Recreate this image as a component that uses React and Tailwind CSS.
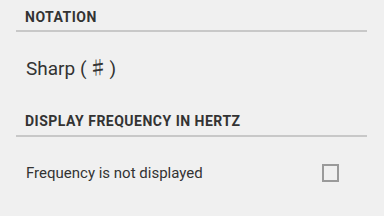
export default function App() {
  return (
    <div className="w-[384px] h-[216px] bg-[#f0f0f0] overflow-hidden text-[#333333]" style={{ fontFamily: 'Roboto, "Liberation Sans", sans-serif' }}>
      <div className="pt-[9px] pl-[25px] text-[14px] leading-[16px] font-bold tracking-[0.5px]">NOTATION</div>
      <div className="mt-[5px] ml-[16px] mr-[17px] h-[2px] bg-[#c8c8c8]" />
      <div className="mt-[25px] pl-[26px] text-[19px] leading-[24px] h-[24px]">
        <span>Sharp (</span>
        <span className="mx-[2px] leading-none font-medium" style={{ fontFamily: '"Noto Sans CJK JP", sans-serif' }}>♯</span>
        <span>)</span>
      </div>
      <div className="mt-[32px] pl-[25px] text-[14px] leading-[16px] font-bold tracking-[0.5px]">DISPLAY FREQUENCY IN HERTZ</div>
      <div className="mt-[6px] ml-[16px] mr-[17px] h-[2px] bg-[#c8c8c8]" />
      <div className="mt-[27px] pl-[26px] pr-[45px] flex items-center justify-between">
        <span className="text-[15px] leading-[18px]">Frequency is not displayed</span>
        <div className="w-[17px] h-[18px] border-2 border-[#9a9a9a]" />
      </div>
    </div>
  );
}
